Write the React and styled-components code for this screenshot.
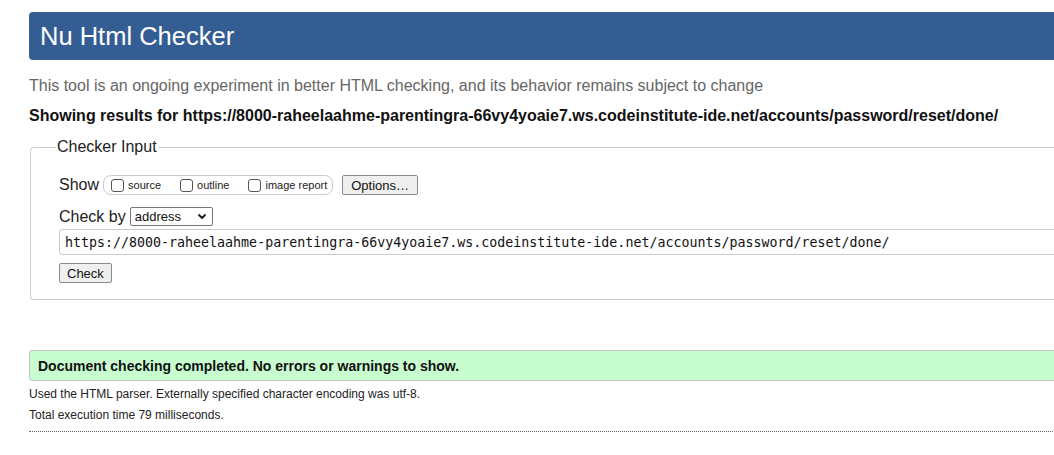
import React from "react";
import styled, { createGlobalStyle } from "styled-components";

const GlobalStyle = createGlobalStyle`
  html, body {
    margin: 0;
    padding: 0;
    background: #fff;
    overflow: hidden;
  }
  body {
    font-family: "Liberation Sans", Arial, sans-serif;
    color: #111;
  }
`;

const url =
  "https://8000-raheelaahme-parentingra-66vy4yoaie7.ws.codeinstitute-ide.net/accounts/password/reset/done/";

const App = () => {
  return (
    <>
      <GlobalStyle />
      <Page>
        <Header>Nu Html Checker</Header>
        <Intro>
          This tool is an ongoing experiment in better HTML checking, and its
          behavior remains subject to change
        </Intro>
        <ResultsFor>Showing results for {url}</ResultsFor>
        <Fieldset>
          <Legend>Checker Input</Legend>
          <Row>
            <RowLabel>Show</RowLabel>
            <OptionGroup>
              <CheckLabel>
                <CheckBox />
                source
              </CheckLabel>
              <CheckLabel>
                <CheckBox />
                outline
              </CheckLabel>
              <CheckLabel>
                <CheckBox />
                image report
              </CheckLabel>
            </OptionGroup>
            <Button $wide>Options…</Button>
          </Row>
          <Row $top={12}>
            <RowLabel>Check by</RowLabel>
            <Select>
              <span>address</span>
              <svg width="10" height="7" viewBox="0 0 10 7">
                <path
                  d="M1.5 1.5 L5 5 L8.5 1.5"
                  fill="none"
                  stroke="#111"
                  strokeWidth="1.8"
                />
              </svg>
            </Select>
          </Row>
          <UrlField>{url}</UrlField>
          <Row $top={8}>
            <Button>Check</Button>
          </Row>
        </Fieldset>
        <Success>
          Document checking completed. No errors or warnings to show.
        </Success>
        <Note>
          Used the HTML parser. Externally specified character encoding was
          utf-8.
        </Note>
        <Note>Total execution time 79 milliseconds.</Note>
        <Rule />
      </Page>
    </>
  );
};

export default App;

const Page = styled.div`
  margin-left: 29px;
  width: 1060px;
  padding-top: 12px;
`;

const Header = styled.h1`
  margin: 0;
  height: 48px;
  display: flex;
  align-items: center;
  padding-left: 11px;
  background: #345e93;
  color: #fff;
  font-size: 25.5px;
  font-weight: normal;
  border-radius: 4px 0 0 4px;
`;

const Intro = styled.p`
  margin: 17px 0 0;
  font-size: 16px;
  line-height: 18px;
  color: #666;
`;

const ResultsFor = styled.p`
  margin: 12px 0 0;
  font-size: 16px;
  line-height: 18px;
  font-weight: bold;
  white-space: nowrap;
`;

const Fieldset = styled.fieldset`
  margin: 13px 0 0 1px;
  padding: 19px 0 16px 28px;
  border: 1px solid #ccc;
  border-radius: 4px 0 0 4px;
  border-right: none;
  min-width: 0;
`;

const Legend = styled.legend`
  margin-left: -3px;
  padding: 0 1px;
  font-size: 16px;
  color: #222;
`;

const Row = styled.div`
  display: flex;
  align-items: center;
  margin-top: ${(p) => (p.$top ? `${p.$top}px` : "0")};
`;

const RowLabel = styled.span`
  font-size: 16px;
  color: #222;
  margin-right: 4px;
`;

const OptionGroup = styled.div`
  display: flex;
  align-items: center;
  gap: 19px;
  height: 18px;
  padding: 0 5px 0 7px;
  border: 1px solid #ccc;
  border-radius: 8px;
`;

const CheckLabel = styled.label`
  display: flex;
  align-items: center;
  font-size: 11px;
  color: #222;
`;

const CheckBox = styled.span`
  box-sizing: border-box;
  width: 13px;
  height: 13px;
  border: 1px solid #555;
  border-radius: 3px;
  margin-right: 4px;
`;

const Button = styled.button`
  font-family: "Liberation Sans", Arial, sans-serif;
  font-size: 13px;
  color: #111;
  height: 20px;
  padding: 0 ${(p) => (p.$wide ? "8px" : "7px")};
  margin-left: ${(p) => (p.$wide ? "9px" : "0")};
  background: #efefef;
  border: 1px solid #8a8a8a;
  border-radius: 2px;
`;

const Select = styled.div`
  display: flex;
  align-items: center;
  justify-content: space-between;
  box-sizing: border-box;
  width: 83px;
  height: 19px;
  padding: 0 5px 0 4px;
  border: 1px solid #777;
  border-radius: 2px;
  font-size: 13px;
  color: #111;
`;

const UrlField = styled.div`
  margin-top: 3px;
  box-sizing: border-box;
  height: 26px;
  display: flex;
  align-items: center;
  padding-left: 5px;
  border: 1px solid #ccc;
  border-right: none;
  border-radius: 4px 0 0 4px;
  font-family: "DejaVu Sans Mono", monospace;
  font-size: 13.3px;
  color: #111;
  white-space: nowrap;
  overflow: hidden;
`;

const Success = styled.div`
  margin-top: 50px;
  box-sizing: border-box;
  height: 31px;
  display: flex;
  align-items: center;
  padding-left: 8px;
  background: #c8fdd0;
  border: 1px solid #c4c4c4;
  border-right: none;
  border-radius: 4px 0 0 4px;
  font-size: 14px;
  font-weight: bold;
  color: #111;
`;

const Note = styled.p`
  margin: 6px 0 0;
  font-size: 12px;
  line-height: 15px;
  color: #222;
`;

const Rule = styled.hr`
  margin: 8px 0 0;
  border: none;
  border-top: 1px dotted #666;
`;
